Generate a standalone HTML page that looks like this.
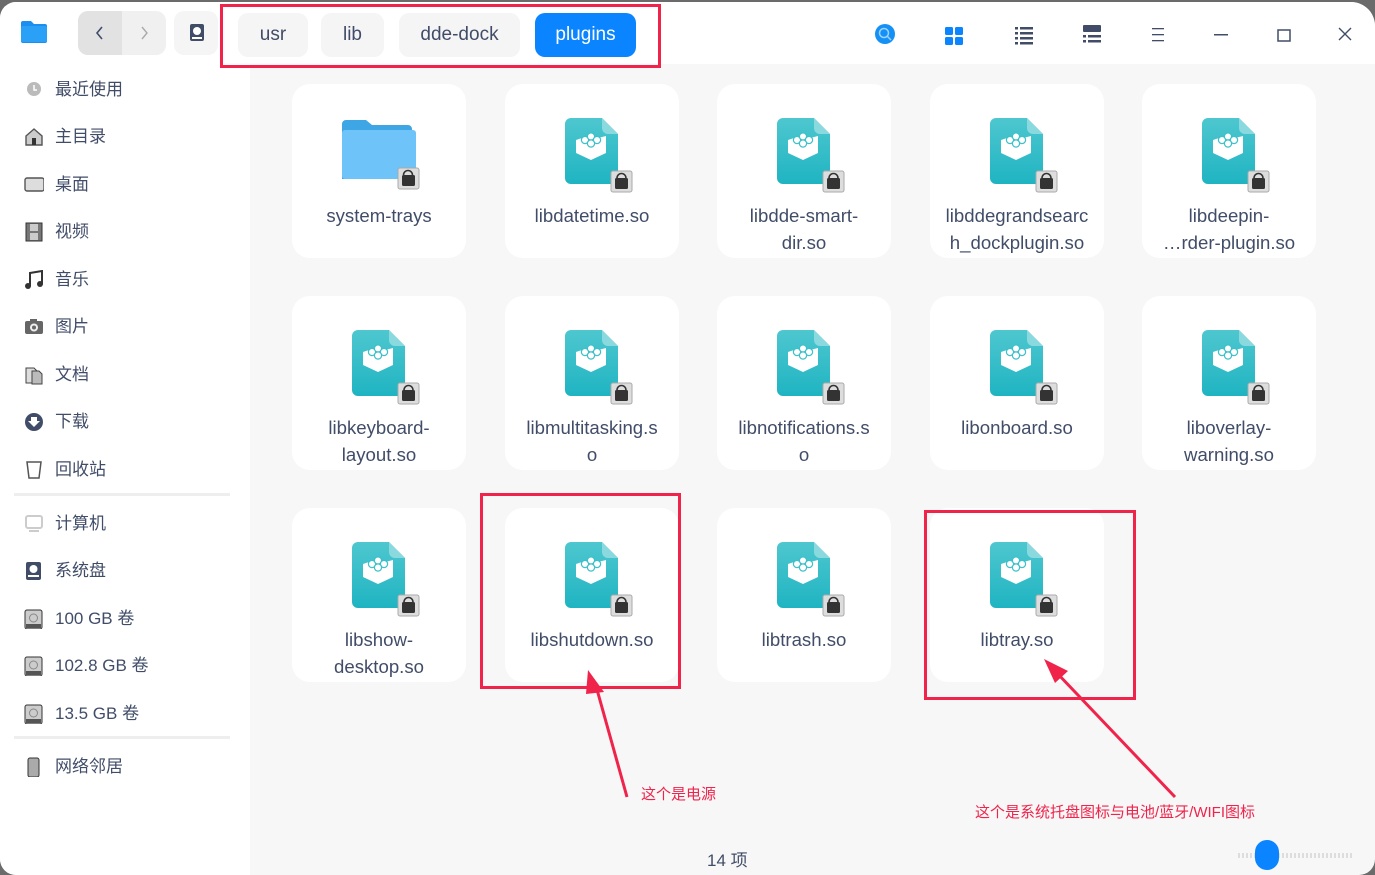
<!DOCTYPE html>
<html><head><meta charset="utf-8"><style>
*{margin:0;padding:0;box-sizing:border-box}
body{width:1375px;height:875px;overflow:hidden;background:#6b6b6b;font-family:"Liberation Sans","Noto Sans CJK SC",sans-serif;position:relative}
.win{position:absolute;left:0;top:2px;width:1375px;height:873px;background:#f7f7f7;border-radius:16px 24px 16px 16px;overflow:hidden}
.hdr{position:absolute;left:0;top:0;width:1375px;height:62px;background:#fff}
.side{position:absolute;left:0;top:62px;width:250px;height:811px;background:#fff}
.si{position:absolute;left:55px;font-size:17px;color:#414d68;height:24px;line-height:24px}
.ic{position:absolute;left:24px;width:20px;height:20px}
.sep{position:absolute;left:14px;width:216px;height:3px;background:#eee}
.card{position:absolute;width:174px;height:174px;background:#fff;border-radius:18px}
.card svg{position:absolute;left:59px;top:34px}
.card .t{position:absolute;left:-5px;width:184px;top:118px;text-align:center;font-size:18.6px;line-height:27px;color:#414d68}
.crumb{position:absolute;top:11px;height:44px;line-height:44px;border-radius:10px;background:#f5f5f5;font-size:19px;color:#414d68;text-align:center}
.red{position:absolute;border:3px solid #f0234b}
.ann{position:absolute;color:#f0234b;font-size:15px}
</style></head><body>
<svg width="0" height="0" style="position:absolute">
<defs>
<linearGradient id="g" x1="0" y1="0" x2="0" y2="1"><stop offset="0" stop-color="#4ec7cf"/><stop offset="1" stop-color="#1fb4c2"/></linearGradient>
<symbol id="f" viewBox="0 0 76 76">
<path d="M7 0H38L54 16V60a6 6 0 0 1-6 6H7a6 6 0 0 1-6-6V6a6 6 0 0 1 6-6z" fill="url(#g)"/>
<path d="M38 0L54 16H44a6 6 0 0 1-6-6z" fill="#8ad9de"/>
<path d="M12 22L24 18 30 21 42 18V35L27 42 12 35z" fill="#fff"/>
<circle cx="21" cy="22" r="3.6" fill="#fff" stroke="#3cc0c9" stroke-width="1.2"/><circle cx="27" cy="18.5" r="3.6" fill="#fff" stroke="#3cc0c9" stroke-width="1.2"/><circle cx="33" cy="22" r="3.6" fill="#fff" stroke="#3cc0c9" stroke-width="1.2"/><circle cx="27" cy="25.5" r="3.6" fill="#fff" stroke="#3cc0c9" stroke-width="1.2"/>
<rect x="47" y="53" width="21" height="21" rx="2" fill="#ddd" stroke="#aaa"/>
<path d="M53 60a4.5 4.5 0 0 1 9 0" fill="none" stroke="#333" stroke-width="1.6"/>
<rect x="51" y="60" width="13" height="11" rx="1.5" fill="#333"/>
</symbol>
</defs></svg>
<div class="win">
<div class="hdr">
<svg style="position:absolute;left:20px;top:18px" width="28" height="24"><path d="M1 3a2 2 0 0 1 2-2h8l3 3h11a2 2 0 0 1 2 2v15a2 2 0 0 1-2 2H3a2 2 0 0 1-2-2z" fill="#1b8ff0"/><rect x="1" y="6" width="26" height="16" rx="2" fill="#2ba0f7"/></svg>
<div style="position:absolute;left:78px;top:9px;width:88px;height:44px;border-radius:10px;background:#f0f0f0"><div style="position:absolute;left:0;top:0;width:44px;height:44px;border-radius:10px 0 0 10px;background:#e2e2e2"></div>
<svg style="position:absolute;left:0;top:0" width="88" height="44"><path d="M24 16l-5 6 5 6" stroke="#414d68" stroke-width="1.6" fill="none"/><path d="M64 16l5 6-5 6" stroke="#aaa" stroke-width="1.4" fill="none"/></svg></div>
<div style="position:absolute;left:174px;top:9px;width:44px;height:44px;border-radius:10px;background:#f5f5f5"><svg style="position:absolute;left:15px;top:12px" width="16" height="20"><rect x="1" y="1" width="14" height="17" rx="2" fill="#414d68"/><circle cx="8" cy="8" r="4" fill="#fff"/><rect x="3" y="14" width="10" height="2" fill="#fff"/></svg></div>
<div class="crumb" style="left:238px;width:70px">usr</div>
<div class="crumb" style="left:321px;width:63px">lib</div>
<div class="crumb" style="left:399px;width:121px">dde-dock</div>
<div class="crumb" style="left:535px;width:101px;background:#0a84ff;color:#fff">plugins</div>
<svg style="position:absolute;left:860px;top:10px" width="515" height="46">
<circle cx="25" cy="22" r="10" fill="#1591f5"/><circle cx="24" cy="21" r="4.5" fill="none" stroke="#9fd3ff" stroke-width="1.5"/><path d="M27 24l4 4" stroke="#9fd3ff" stroke-width="1.5"/>
<rect x="85" y="15" width="8" height="8" rx="1.5" fill="#0a84ff"/><rect x="95" y="15" width="8" height="8" rx="1.5" fill="#0a84ff"/><rect x="85" y="25" width="8" height="8" rx="1.5" fill="#0a84ff"/><rect x="95" y="25" width="8" height="8" rx="1.5" fill="#0a84ff"/>
<g fill="#414d68"><rect x="155" y="15" width="3" height="2.5"/><rect x="160" y="15" width="13" height="2.5"/><rect x="155" y="20" width="3" height="2.5"/><rect x="160" y="20" width="13" height="2.5"/><rect x="155" y="25" width="3" height="2.5"/><rect x="160" y="25" width="13" height="2.5"/><rect x="155" y="30" width="3" height="2.5"/><rect x="160" y="30" width="13" height="2.5"/>
<rect x="223" y="13" width="18" height="7" rx="1"/><rect x="223" y="23" width="3" height="2.5"/><rect x="228" y="23" width="13" height="2.5"/><rect x="223" y="28" width="3" height="2.5"/><rect x="228" y="28" width="13" height="2.5"/>
<rect x="292" y="16" width="12" height="1.3"/><rect x="292" y="22" width="12" height="1.3"/><rect x="292" y="28" width="12" height="1.3"/>
<rect x="354" y="22" width="14" height="1.5"/></g>
<rect x="418" y="18" width="12" height="11" fill="none" stroke="#414d68" stroke-width="1.5"/>
<path d="M479 16l12 12M491 16l-12 12" stroke="#414d68" stroke-width="1.4"/>
</svg>
</div>
<div class="side">
<div class="ic" style="top:16px"><svg width="20" height="20"><circle cx="10" cy="9" r="7" fill="#bbb"/><path d="M10 5v5h3" stroke="#fff" stroke-width="1.5" fill="none"/></svg></div><div class="si" style="top:14px">最近使用</div>
<div class="ic" style="top:63px"><svg width="20" height="20"><path d="M2 9l8-7 8 7v9H2z" fill="#ccc" stroke="#555" stroke-width="1.4"/><rect x="8" y="11" width="4" height="7" fill="#333"/></svg></div><div class="si" style="top:61px">主目录</div>
<div class="ic" style="top:111px"><svg width="20" height="20"><rect x="1" y="3" width="19" height="13" rx="2" fill="#ddd" stroke="#555" stroke-width="1.4"/></svg></div><div class="si" style="top:109px">桌面</div>
<div class="ic" style="top:158px"><svg width="20" height="20"><rect x="2" y="1" width="16" height="18" fill="#777" stroke="#333"/><rect x="6" y="2" width="8" height="7" fill="#ccc"/><rect x="6" y="11" width="8" height="7" fill="#ccc"/></svg></div><div class="si" style="top:156px">视频</div>
<div class="ic" style="top:206px"><svg width="20" height="20"><path d="M6 16V3l12-2v13" stroke="#333" stroke-width="2" fill="none"/><circle cx="4" cy="16" r="3" fill="#333"/><circle cx="16" cy="14" r="3" fill="#333"/></svg></div><div class="si" style="top:204px">音乐</div>
<div class="ic" style="top:253px"><svg width="20" height="20"><rect x="1" y="4" width="18" height="13" rx="2" fill="#666"/><rect x="6" y="2" width="7" height="3" fill="#666"/><circle cx="10" cy="10.5" r="4" fill="#eee"/><circle cx="10" cy="10.5" r="2" fill="#666"/></svg></div><div class="si" style="top:251px">图片</div>
<div class="ic" style="top:301px"><svg width="20" height="20"><path d="M2 3h8l3 3v12H2z" fill="#ddd" stroke="#444"/><path d="M8 6h7l3 3v10H8z" fill="#bbb" stroke="#444"/></svg></div><div class="si" style="top:299px">文档</div>
<div class="ic" style="top:348px"><svg width="20" height="20"><circle cx="10" cy="10" r="9" fill="#414d68"/><path d="M7 5h6v4h3l-6 6-6-6h3z" fill="#fff"/></svg></div><div class="si" style="top:346px">下载</div>
<div class="ic" style="top:396px"><svg width="20" height="20"><path d="M3 2h14l-2 16H5z" fill="none" stroke="#555" stroke-width="1.5"/></svg></div><div class="si" style="top:394px">回收站</div>
<div class="sep" style="top:429px"></div>
<div class="ic" style="top:450px"><svg width="20" height="20"><rect x="2" y="2" width="16" height="12" rx="2" fill="none" stroke="#ccc" stroke-width="2"/><rect x="5" y="16" width="10" height="2" fill="#ccc"/></svg></div><div class="si" style="top:448px">计算机</div>
<div class="ic" style="top:497px"><svg width="20" height="20"><rect x="2" y="1" width="15" height="18" rx="2" fill="#414d68"/><circle cx="9.5" cy="8" r="4" fill="#fff"/><rect x="4" y="14" width="11" height="2" fill="#fff"/></svg></div><div class="si" style="top:495px">系统盘</div>
<div class="ic" style="top:545px"><svg width="20" height="20"><rect x="1" y="1" width="17" height="19" rx="2" fill="#ccc" stroke="#333"/><circle cx="9.5" cy="9" r="4" fill="none" stroke="#888"/><rect x="2" y="15" width="15" height="4" fill="#555"/></svg></div><div class="si" style="top:543px">100 GB 卷</div>
<div class="ic" style="top:592px"><svg width="20" height="20"><rect x="1" y="1" width="17" height="19" rx="2" fill="#ccc" stroke="#333"/><circle cx="9.5" cy="9" r="4" fill="none" stroke="#888"/><rect x="2" y="15" width="15" height="4" fill="#555"/></svg></div><div class="si" style="top:590px">102.8 GB 卷</div>
<div class="ic" style="top:640px"><svg width="20" height="20"><rect x="1" y="1" width="17" height="19" rx="2" fill="#ccc" stroke="#333"/><circle cx="9.5" cy="9" r="4" fill="none" stroke="#888"/><rect x="2" y="15" width="15" height="4" fill="#555"/></svg></div><div class="si" style="top:638px">13.5 GB 卷</div>
<div class="sep" style="top:672px"></div>
<div class="ic" style="top:693px"><svg width="20" height="20"><rect x="4" y="1" width="11" height="19" rx="2" fill="#aaa" stroke="#333"/></svg></div><div class="si" style="top:691px">网络邻居</div>
</div>

<div class="card" style="left:292px;top:82px"><svg style="left:48px;top:34px" width="80" height="72"><path d="M2 6a4 4 0 0 1 4-4h20l6 5h36a4 4 0 0 1 4 4v50H2z" fill="#3fa6e6"/><rect x="2" y="12" width="74" height="49" rx="3" fill="#6ec3f8"/><rect x="58" y="50" width="21" height="21" rx="2" fill="#ddd" stroke="#aaa"/><path d="M63.5 57a4.5 4.5 0 0 1 9 0" fill="none" stroke="#333" stroke-width="1.6"/><rect x="62" y="57" width="13" height="11" rx="1.5" fill="#333"/></svg><div class="t">system-trays</div></div>
<div class="card" style="left:505px;top:82px"><svg width="76" height="76"><use href="#f"/></svg><div class="t">libdatetime.so</div></div>
<div class="card" style="left:717px;top:82px"><svg width="76" height="76"><use href="#f"/></svg><div class="t">libdde-smart-<br>dir.so</div></div>
<div class="card" style="left:930px;top:82px"><svg width="76" height="76"><use href="#f"/></svg><div class="t">libddegrandsearc<br>h_dockplugin.so</div></div>
<div class="card" style="left:1142px;top:82px"><svg width="76" height="76"><use href="#f"/></svg><div class="t">libdeepin-<br>…rder-plugin.so</div></div>

<div class="card" style="left:292px;top:294px"><svg width="76" height="76"><use href="#f"/></svg><div class="t">libkeyboard-<br>layout.so</div></div>
<div class="card" style="left:505px;top:294px"><svg width="76" height="76"><use href="#f"/></svg><div class="t">libmultitasking.s<br>o</div></div>
<div class="card" style="left:717px;top:294px"><svg width="76" height="76"><use href="#f"/></svg><div class="t">libnotifications.s<br>o</div></div>
<div class="card" style="left:930px;top:294px"><svg width="76" height="76"><use href="#f"/></svg><div class="t">libonboard.so</div></div>
<div class="card" style="left:1142px;top:294px"><svg width="76" height="76"><use href="#f"/></svg><div class="t">liboverlay-<br>warning.so</div></div>

<div class="card" style="left:292px;top:506px"><svg width="76" height="76"><use href="#f"/></svg><div class="t">libshow-<br>desktop.so</div></div>
<div class="card" style="left:505px;top:506px"><svg width="76" height="76"><use href="#f"/></svg><div class="t">libshutdown.so</div></div>
<div class="card" style="left:717px;top:506px"><svg width="76" height="76"><use href="#f"/></svg><div class="t">libtrash.so</div></div>
<div class="card" style="left:930px;top:506px"><svg width="76" height="76"><use href="#f"/></svg><div class="t">libtray.so</div></div>

<div style="position:absolute;left:707px;top:844px;font-size:17px;color:#414d68">14 项</div>
<div style="position:absolute;left:1238px;top:851px;width:114px;height:5px;background:repeating-linear-gradient(90deg,#ddd 0 2px,transparent 2px 4px)"></div>
<div style="position:absolute;left:1255px;top:838px;width:24px;height:30px;border-radius:12px;background:#0a84ff"></div>
</div>

<div class="red" style="left:220px;top:4px;width:441px;height:64px"></div>
<div class="red" style="left:480px;top:493px;width:201px;height:196px"></div>
<div class="red" style="left:924px;top:510px;width:212px;height:190px"></div>
<svg style="position:absolute;left:0;top:0" width="1375" height="875">
<path d="M627 797L596 686" stroke="#f0234b" stroke-width="3"/><path d="M588 670l16 22-18 2z" fill="#f0234b"/>
<path d="M1175 797L1056 672" stroke="#f0234b" stroke-width="3"/><path d="M1044 659l24 12-13 12z" fill="#f0234b"/>
</svg>
<div class="ann" style="left:641px;top:783px">这个是电源</div>
<div class="ann" style="left:975px;top:801px">这个是系统托盘图标与电池/蓝牙/WIFI图标</div>
</body></html>
